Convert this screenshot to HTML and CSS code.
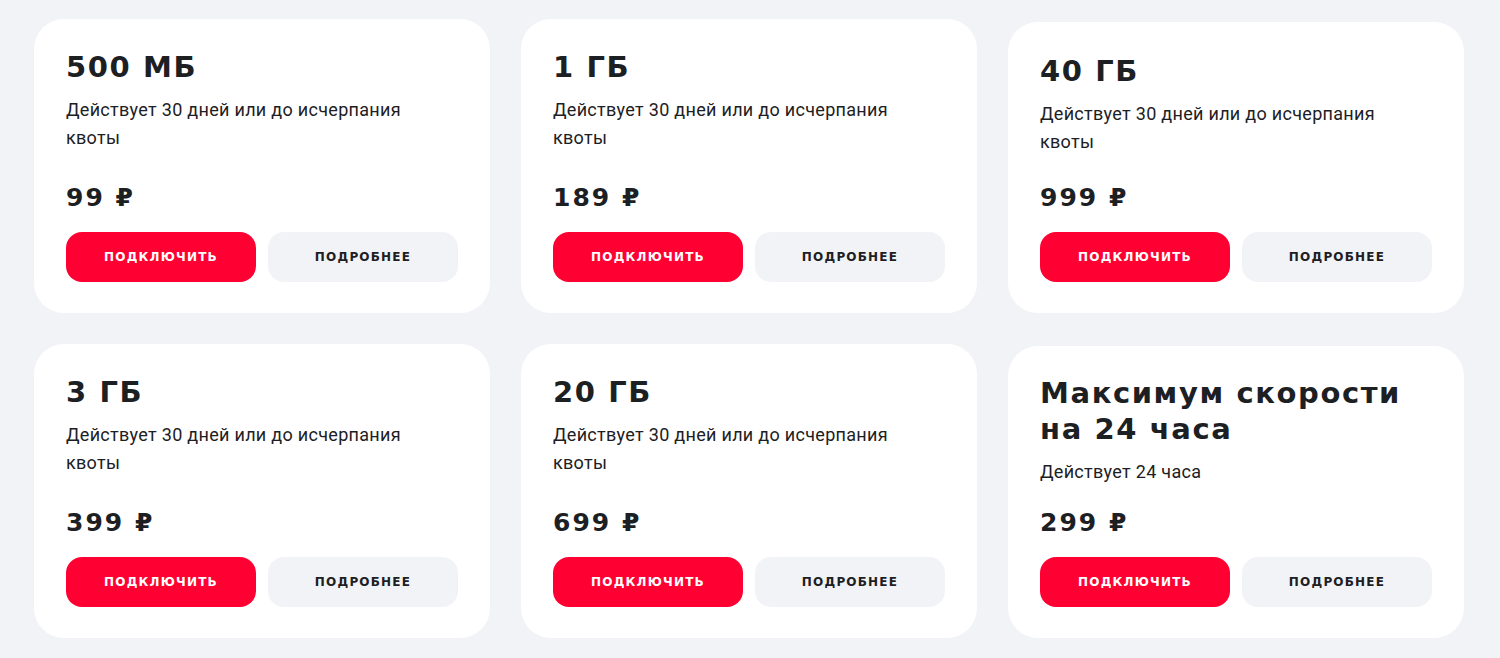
FILE: index.html
```html
<!DOCTYPE html>
<html lang="ru">

<head>
    <meta charset="UTF-8">
    <meta name="viewport" content="width=device-width, initial-scale=1.0">
    <title>Пакеты интернета</title>
    <link rel="stylesheet" href="styles.css">
</head>

<body>
    <div class="packages">
        <div class="card">
            <h2 class="card-title">500 МБ</h2>
            <p class="card-text">Действует 30 дней или до исчерпания квоты</p>
            <div class="card-price">99 ₽</div>
            <div class="card-actions">
                <button class="btn btn-primary">Подключить</button>
                <button class="btn btn-secondary">Подробнее</button>
            </div>
        </div>

        <div class="card">
            <h2 class="card-title">1 ГБ</h2>
            <p class="card-text">Действует 30 дней или до исчерпания квоты</p>
            <div class="card-price">189 ₽</div>
            <div class="card-actions">
                <button class="btn btn-primary">Подключить</button>
                <button class="btn btn-secondary">Подробнее</button>
            </div>
        </div>

        <div class="card card-shifted">
            <h2 class="card-title">40 ГБ</h2>
            <p class="card-text">Действует 30 дней или до исчерпания квоты</p>
            <div class="card-price">999 ₽</div>
            <div class="card-actions">
                <button class="btn btn-primary">Подключить</button>
                <button class="btn btn-secondary">Подробнее</button>
            </div>
        </div>

        <div class="card">
            <h2 class="card-title">3 ГБ</h2>
            <p class="card-text">Действует 30 дней или до исчерпания квоты</p>
            <div class="card-price">399 ₽</div>
            <div class="card-actions">
                <button class="btn btn-primary">Подключить</button>
                <button class="btn btn-secondary">Подробнее</button>
            </div>
        </div>

        <div class="card">
            <h2 class="card-title">20 ГБ</h2>
            <p class="card-text">Действует 30 дней или до исчерпания квоты</p>
            <div class="card-price">699 ₽</div>
            <div class="card-actions">
                <button class="btn btn-primary">Подключить</button>
                <button class="btn btn-secondary">Подробнее</button>
            </div>
        </div>

        <div class="card card-shifted-sm">
            <h2 class="card-title">Максимум скорости на 24 часа</h2>
            <p class="card-text">Действует 24 часа</p>
            <div class="card-price">299 ₽</div>
            <div class="card-actions">
                <button class="btn btn-primary">Подключить</button>
                <button class="btn btn-secondary">Подробнее</button>
            </div>
        </div>
    </div>
</body>

</html>
```

FILE: styles.css
```css
body {
    font-family: Roboto, "Noto Sans", sans-serif;
    background-color: #f2f3f7;
    margin: 0;
    padding: 0;
    color: #1d2023;
}

.packages {
    display: grid;
    grid-template-columns: repeat(3, 456px);
    grid-auto-rows: 294px;
    column-gap: 31px;
    row-gap: 31px;
    padding: 19px 0 20px 34px;
}

.card {
    background-color: #fff;
    border-radius: 30px;
    padding: 30px 32px 31px;
    display: flex;
    flex-direction: column;
}

.card-shifted {
    margin-top: 3px;
    padding-top: 31px;
}

.card-shifted-sm {
    margin-top: 2px;
    padding-top: 29px;
}

.card-title {
    font-family: "DejaVu Sans", sans-serif;
    font-size: 29px;
    line-height: 36px;
    font-weight: bold;
    letter-spacing: 1.6px;
    margin: 0;
}

.card-text {
    font-size: 18px;
    line-height: 28px;
    letter-spacing: 0.3px;
    margin: 11px 0 0;
    max-width: 380px;
}

.card-price {
    font-family: "DejaVu Sans", sans-serif;
    font-size: 25px;
    font-weight: bold;
    line-height: 30px;
    letter-spacing: 2px;
    margin-top: auto;
}

.card-actions {
    display: flex;
    gap: 12px;
    margin-top: 19px;
}

.btn {
    flex: 1;
    height: 50px;
    border: none;
    border-radius: 16px;
    font-family: "DejaVu Sans", sans-serif;
    font-size: 12px;
    font-weight: bold;
    letter-spacing: 1.2px;
    text-transform: uppercase;
    cursor: pointer;
}

.btn-primary {
    background-color: #ff0032;
    color: #fff;
}

.btn-secondary {
    background-color: #f2f3f7;
    color: #1d2023;
}
```
